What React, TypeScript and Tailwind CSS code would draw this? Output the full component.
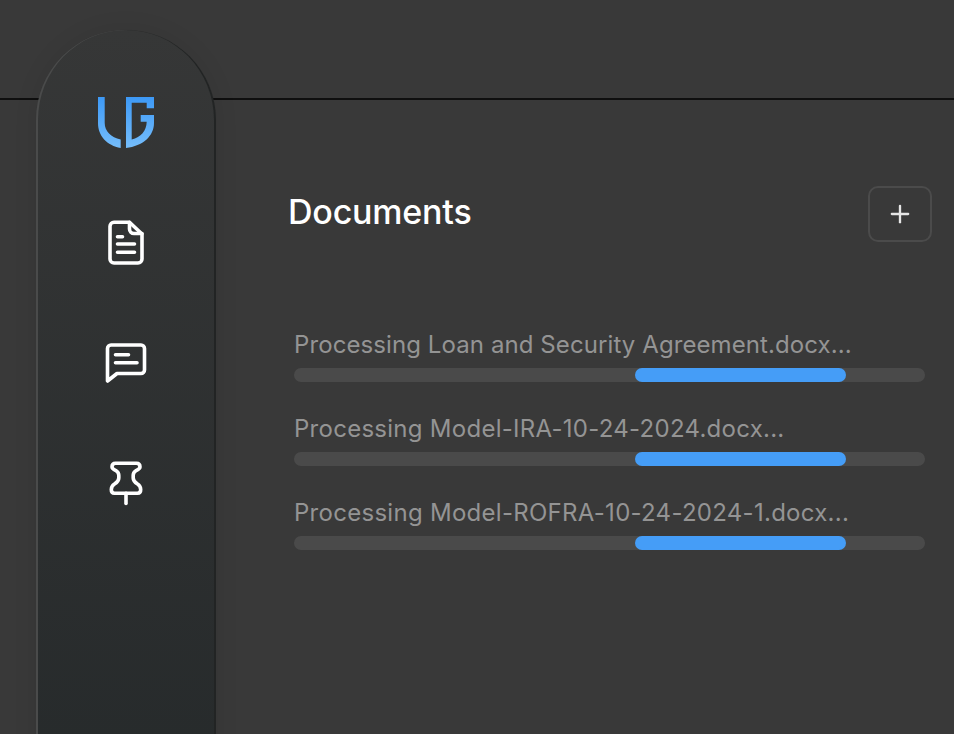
import { Plus } from "lucide-react";

const files = [
  { name: "Processing Loan and Security Agreement.docx...", tracking: "tracking-[0.09px]" },
  { name: "Processing Model-IRA-10-24-2024.docx...", tracking: "tracking-[0.27px]" },
  { name: "Processing Model-ROFRA-10-24-2024-1.docx...", tracking: "tracking-[0.28px]" },
];

function Logo() {
  return (
    <svg width="56" height="51" viewBox="98 97 56 51" className="block">
      <defs>
        <linearGradient id="logoFill" x1="0" y1="0" x2="0" y2="1">
          <stop offset="0" stopColor="#3d99f6" />
          <stop offset="1" stopColor="#75bdfb" />
        </linearGradient>
      </defs>
      <path
        fill="url(#logoFill)"
        d="M98 97H104.7V123C104.7 131 111 137.5 120.7 139.5V148C107 145.5 98 136 98 123Z"
      />
      <path
        fill="url(#logoFill)"
        d="M126 97H154V108.3H146.7V102.7H131.7V139.5C141 137 146.5 131 146.7 121.7H140.7V115H154V123C154 136 143 146 126 148Z"
      />
    </svg>
  );
}

function DocIcon() {
  return (
    <svg width="40" height="48" viewBox="106 219 40 48" fill="none" stroke="white" strokeWidth="3.6" strokeLinecap="round" strokeLinejoin="round" className="mt-[71px] block">
      <path d="M114 222.3H129.5L142 234V259a4 4 0 0 1-4 4H114a4 4 0 0 1-4-4V226.3a4 4 0 0 1 4-4Z" />
      <path d="M129.5 222.3V229a4.5 4.5 0 0 0 4.5 4.5H142" />
      <path d="M117.5 236.8H122.5M117.5 244H134.5M117.5 252.3H134.5" />
    </svg>
  );
}

function ChatIcon() {
  return (
    <svg width="44" height="44" viewBox="104 341 44 44" fill="none" stroke="white" strokeWidth="3.6" strokeLinecap="round" strokeLinejoin="round" className="mt-[74px] block">
      <path d="M111 345H141a3.5 3.5 0 0 1 3.5 3.5V370a3.5 3.5 0 0 1-3.5 3.5H117L107.5 381V348.5a3.5 3.5 0 0 1 3.5-3.5Z" />
      <path d="M115.5 354.7H128.5M115.5 362.7H137" />
    </svg>
  );
}

function PinIcon() {
  return (
    <svg width="36" height="46" viewBox="108 460 36 46" fill="none" stroke="white" strokeWidth="3.6" strokeLinecap="round" strokeLinejoin="round" className="mt-[75px] block">
      <path d="M115.5 463.3H136.5C139.3 463.3 140 465.5 140 467C140 469 137.5 470 135.5 471C134 472 133.2 473.5 133.2 475.5V478C133.2 481 135 482.5 137.5 484C141.5 486.5 142 493 137.5 493.3H114.5C110 493 110.5 486.5 114.5 484C117 482.5 118.8 481 118.8 478V475.5C118.8 473.5 118 472 116.5 471C114.5 470 112 469 112 467C112 465.5 112.7 463.3 115.5 463.3Z" />
      <path d="M126 493.3V503.5" />
    </svg>
  );
}

export default function App() {
  return (
    <div className="relative h-screen overflow-hidden bg-[#393939] font-['Inter',sans-serif]">
      {/* Top bar */}
      <div className="h-[100px] border-b-2 border-[#0f0f0f]" />

      {/* Floating sidebar */}
      <aside className="absolute left-[36px] top-[30px] flex h-[760px] w-[180px] flex-col items-center rounded-t-[90px] border-x-2 border-l-[#4a4b4b] border-r-[#222424] bg-gradient-to-b from-[#363737] to-[#262a2b] pt-[67px] shadow-[0_0_24px_rgba(0,0,0,0.08)]">
        <Logo />
        <DocIcon />
        <ChatIcon />
        <PinIcon />
      </aside>

      {/* Content */}
      <main className="pl-[288px] pr-[22px] pt-[86px]">
        <div className="flex items-center justify-between">
          <h1 className="relative -top-[2px] text-[34px] font-medium leading-[40px] tracking-[-0.2px] text-white">Documents</h1>
          <button className="flex h-[56px] w-[64px] items-center justify-center rounded-[10px] border-2 border-[#4b4b4b] text-[#e6e6e6]">
            <Plus size={28} strokeWidth={2} />
          </button>
        </div>

        <div className="mt-[86px] flex flex-col gap-[30px] pl-[6px] pr-[7px]">
          {files.map((file) => (
            <div key={file.name}>
              <div className={`pt-[1px] text-[24px] leading-[31px] text-[#949494] ${file.tracking}`}>{file.name}</div>
              <div className="mt-[8px] flex h-[14px] rounded-full bg-[#4a4a4a] pl-[341px] pr-[79px]">
                <div className="h-full w-full rounded-full bg-[#459df7]" />
              </div>
            </div>
          ))}
        </div>
      </main>
    </div>
  );
}
